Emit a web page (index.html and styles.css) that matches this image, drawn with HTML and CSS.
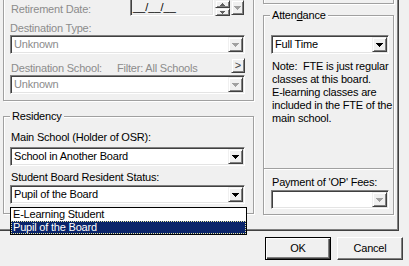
FILE: index.html
```html
<!DOCTYPE html>
<html>
<head>
<meta charset="utf-8">
<link rel="stylesheet" href="styles.css">
</head>
<body>
<div class="page">
  <div class="col-left">
    <div class="group g-dest">
      <div class="row-ret">
        <span class="lbl dis">Retirement Date:</span>
        <div class="datefield">__/__/__</div>
        <div class="spin">
          <div class="spin-btn"><svg class="arr mid" width="5" height="3" viewBox="0 0 5 3" shape-rendering="crispEdges"><path d="M2 0h1v1h1v1h1v1h-5v-1h1v-1h1z"/></svg></div>
          <div class="spin-btn"><svg class="arr mid" width="5" height="3" viewBox="0 0 5 3" shape-rendering="crispEdges"><path d="M0 0h5v1h-1v1h-1v1h-1v-1h-1v-1h-1z"/></svg></div>
        </div>
        <div class="raised cal-btn"><svg class="arr gray" width="7" height="4" viewBox="0 0 7 4" shape-rendering="crispEdges"><path d="M0 0h7v1h-1v1h-1v1h-1v1h-1v-1h-1v-1h-1v-1h-1z"/></svg></div>
      </div>
      <div class="lbl dis l-top">Destination Type:</div>
      <div class="combo">
        <span class="combo-text dis">Unknown</span>
        <span class="raised ddbtn"><svg class="arr gray" width="7" height="4" viewBox="0 0 7 4" shape-rendering="crispEdges"><path d="M0 0h7v1h-1v1h-1v1h-1v1h-1v-1h-1v-1h-1v-1h-1z"/></svg></span>
      </div>
      <div class="row-school">
        <span class="lbl dis school-lbl">Destination School:</span>
        <span class="lbl dis filter">Filter: All Schools</span>
        <span class="raised gt-btn">&gt;</span>
      </div>
      <div class="combo">
        <span class="combo-text dis">Unknown</span>
        <span class="raised ddbtn"><svg class="arr gray" width="7" height="4" viewBox="0 0 7 4" shape-rendering="crispEdges"><path d="M0 0h7v1h-1v1h-1v1h-1v1h-1v-1h-1v-1h-1v-1h-1z"/></svg></span>
      </div>
    </div>
    <div class="group g-res">
      <span class="caption">Residency</span>
      <div class="lbl">Main School (Holder of OSR):</div>
      <div class="combo combo-gap">
        <span class="combo-text">School in Another Board</span>
        <span class="raised ddbtn"><svg class="arr" width="7" height="4" viewBox="0 0 7 4" shape-rendering="crispEdges"><path d="M0 0h7v1h-1v1h-1v1h-1v1h-1v-1h-1v-1h-1v-1h-1z"/></svg></span>
      </div>
      <div class="lbl l-status">Student Board Resident Status:</div>
      <div class="combo combo-open">
        <span class="combo-text">Pupil of the Board</span>
        <span class="raised ddbtn"><svg class="arr" width="7" height="4" viewBox="0 0 7 4" shape-rendering="crispEdges"><path d="M0 0h7v1h-1v1h-1v1h-1v1h-1v-1h-1v-1h-1v-1h-1z"/></svg></span>
        <ul class="droplist">
          <li class="item">E-Learning Student</li>
          <li class="item sel">Pupil of the Board</li>
        </ul>
      </div>
    </div>
  </div>
  <div class="col-right">
    <div class="group g-top"></div>
    <div class="group g-att">
      <span class="caption">Atten<u>d</u>ance</span>
      <div class="att-main">
        <div class="combo">
          <span class="combo-text">Full Time</span>
          <span class="raised ddbtn"><svg class="arr" width="7" height="4" viewBox="0 0 7 4" shape-rendering="crispEdges"><path d="M0 0h7v1h-1v1h-1v1h-1v1h-1v-1h-1v-1h-1v-1h-1z"/></svg></span>
        </div>
        <p class="note">Note:&nbsp; FTE is just regular<br>classes at this board.<br>E&#8209;learning classes are<br>included in the FTE of the<br>main school.</p>
      </div>
      <div class="att-sep"></div>
      <div class="att-pay">
        <div class="lbl">Payment of 'OP' Fees:</div>
        <div class="combo combo-pay">
          <span class="combo-text"></span>
          <span class="raised ddbtn"><svg class="arr gray" width="7" height="4" viewBox="0 0 7 4" shape-rendering="crispEdges"><path d="M0 0h7v1h-1v1h-1v1h-1v1h-1v-1h-1v-1h-1v-1h-1z"/></svg></span>
        </div>
      </div>
    </div>
  </div>
</div>
<div class="buttons">
  <button class="btn btn-default">OK</button>
  <button class="btn">Cancel</button>
</div>
</body>
</html>
```

FILE: styles.css
```css
* { box-sizing: border-box; }

body {
  margin: 0;
  width: 409px;
  height: 266px;
  overflow: hidden;
  background: #f0f0f0;
  font-family: "Liberation Sans", Arial, sans-serif;
  font-size: 11px;
  line-height: 13px;
  letter-spacing: -0.2px;
  color: #000;
}

.page {
  margin: -40px 0 0 -3px;
  width: 401px;
  height: 270px;
  padding: 10px 3px 0 6px;
  display: flex;
  gap: 9px;
  border-right: 1px solid #808080;
  border-bottom: 1px solid #808080;
  box-shadow: 1px 1px 0 #404040;
}

.col-left { width: 251px; display: flex; flex-direction: column; }
.col-right { width: 131px; display: flex; flex-direction: column; }

.group {
  position: relative;
  border: 1px solid #a0a0a0;
  box-shadow: inset 1px 1px 0 #fff, 1px 1px 0 #fff;
}

.caption {
  position: absolute;
  top: -7px;
  left: 6px;
  padding: 0 2px;
  background: #f0f0f0;
  white-space: nowrap;
}

.lbl { display: block; height: 13px; white-space: nowrap; }
.dis { color: #8c8c8c; }

/* upper destination group */
.g-dest { height: 131px; padding: 25px 8px 6px 6px; }

.row-ret {
  display: grid;
  grid-template-columns: 119px 84px 15px 13px;
  column-gap: 1px;
  height: 20px;
  align-items: end;
}
.row-ret .lbl { padding-left: 1px; }

.datefield {
  height: 20px;
  display: flex;
  align-items: flex-end;
  padding: 0 0 1px 2px;
  letter-spacing: 0;
  color: #000;
  background: #f0f0f0;
  border: 1px solid;
  border-color: #808080 #fff #fff #808080;
  box-shadow: inset 1px 1px 0 #404040, inset -1px -1px 0 #e4e4e4;
}

.spin { height: 16px; display: flex; flex-direction: column; }
.spin-btn {
  height: 8px;
  display: flex;
  align-items: center;
  justify-content: center;
  background: #f0f0f0;
  border: 1px solid;
  border-color: #f0f0f0 #404040 #404040 #f0f0f0;
  box-shadow: inset 1px 1px 0 #fff, inset -1px -1px 0 #808080;
}

.raised {
  display: flex;
  align-items: center;
  justify-content: center;
  background: #f0f0f0;
  border: 1px solid;
  border-color: #f0f0f0 #404040 #404040 #f0f0f0;
  box-shadow: inset 1px 1px 0 #fff, inset -1px -1px 0 #808080;
}

.cal-btn { height: 15px; margin-bottom: 1px; }

.arr { display: block; fill: #000; }
.arr.gray { fill: #a0a0a0; }
.arr.mid { fill: #606060; }

.l-top { margin-top: 6px; }

.combo {
  position: relative;
  height: 19px;
  display: flex;
  align-items: center;
  background: #fff;
  border: 1px solid;
  border-color: #808080 #fff #fff #808080;
  box-shadow: inset 1px 1px 0 #404040, inset -1px -1px 0 #e4e4e4;
  padding-left: 3px;
}
.combo-text { flex: 1; white-space: nowrap; overflow: hidden; }

.ddbtn { width: 15px; height: 15px; margin: 0 1px 0 auto; }

.row-school {
  display: flex;
  align-items: flex-end;
  height: 17px;
  margin-top: 4px;
}
.school-lbl { width: 107px; padding-left: 1px; }
.filter { flex: 1; }
.gt-btn {
  align-self: flex-start;
  width: 14px;
  height: 15px;
  font-size: 11px;
  color: #404040;
  letter-spacing: 0;
}

/* residency */
.g-res { margin-top: 15px; height: 98px; padding: 14px 8px 9px 6px; }
.g-res .lbl { padding-left: 1px; }
.combo-gap { margin-top: 3px; }
.l-status { margin-top: 5px; }
.combo-open { margin-top: 1px; }

.droplist {
  position: absolute;
  left: -1px;
  top: 21px;
  width: 237px;
  margin: 0;
  padding: 0;
  list-style: none;
  background: #fff;
  border: 1px solid #000;
  z-index: 2;
}
.item { height: 13px; padding-left: 2px; white-space: nowrap; }
.item.sel {
  background: #0a246a;
  color: #fff;
  outline: 1px dotted #e8e8a0;
  outline-offset: -1px;
}

/* right column */
.g-top { height: 34px; }
.g-att { margin-top: 11px; height: 200px; display: flex; flex-direction: column; }
.att-main { height: 152px; padding: 19px 4px 0 7px; }
.note { margin: 6px 0 0 1px; white-space: nowrap; }
.att-sep { height: 2px; border-top: 1px solid #a0a0a0; border-bottom: 1px solid #fff; }
.att-pay { padding: 6px 4px 5px 7px; }
.att-pay .lbl { padding-left: 1px; }
.combo-pay { margin-top: 1px; }

/* dialog buttons */
.buttons {
  display: flex;
  justify-content: flex-end;
  gap: 6px;
  margin-top: 7px;
  padding-right: 6px;
}
.btn {
  width: 66px;
  height: 23px;
  padding: 0;
  font: inherit;
  letter-spacing: inherit;
  color: #000;
  background: #f0f0f0;
  border: 1px solid;
  border-color: #fff #404040 #404040 #fff;
  box-shadow: inset -1px -1px 0 #808080;
}
.btn-default {
  border-color: #000;
  box-shadow: inset 1px 1px 0 #fff, inset -1px -1px 0 #404040, inset -2px -2px 0 #808080;
}
```
